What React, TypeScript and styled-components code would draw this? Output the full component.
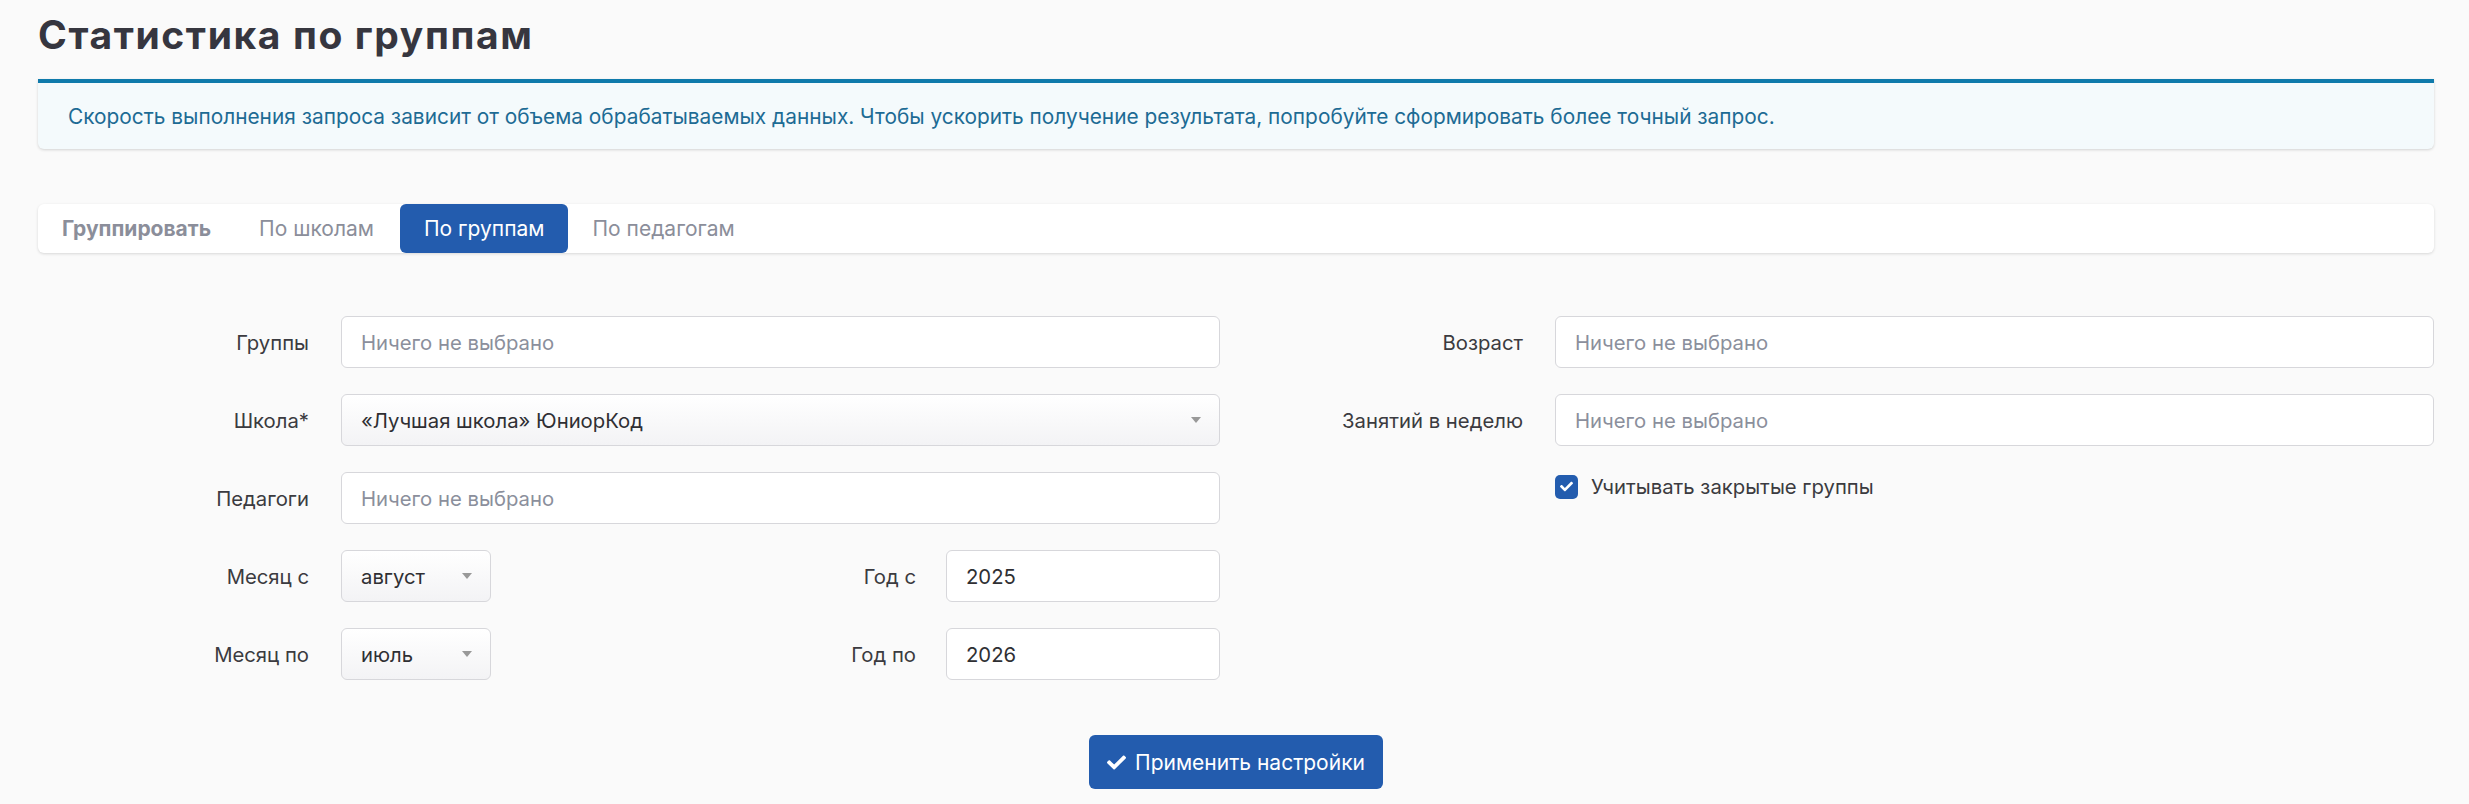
import React from "react";
import styled, { createGlobalStyle } from "styled-components";
import { FaCheck } from "react-icons/fa";

const GlobalStyle = createGlobalStyle`
  html, body {
    margin: 0;
    padding: 0;
    background: #fafafa;
    font-family: Inter, "Noto Sans", "Liberation Sans", sans-serif;
  }
`;

const Page = styled.div`
  padding: 11px 35px 0 38px;
`;

const Title = styled.h1`
  margin: 0;
  font-size: 39px;
  font-weight: 700;
  color: #36363f;
  letter-spacing: 1.6px;
`;

const Alert = styled.div`
  margin-top: 21px;
  background: #f4fafc;
  border-top: 4px solid #0f7aab;
  border-radius: 0 0 6px 6px;
  box-shadow: 0 1px 3px rgba(0, 0, 0, 0.16);
  padding: 21px 30px 20px;
  font-size: 20.85px;
  color: #1d6b94;
`;

const TabBar = styled.div`
  margin-top: 55px;
  height: 49px;
  display: flex;
  align-items: stretch;
  background: #fff;
  border-radius: 6px;
  box-shadow: 0 1px 3px rgba(0, 0, 0, 0.14);
  font-size: 21px;
`;

const Tab = styled.div<{ $active?: boolean; $caption?: boolean }>`
  display: flex;
  align-items: center;
  padding: 0 24px;
  border-radius: 6px;
  color: ${(p) => (p.$active ? "#fff" : "#8b8e9a")};
  background: ${(p) => (p.$active ? "#235cae" : "transparent")};
  font-weight: ${(p) => (p.$caption ? 700 : 400)};
  margin-left: ${(p) => (p.$active ? "2px" : "0")};
`;

const Form = styled.div`
  margin-top: 63px;
  display: grid;
  grid-template-columns: 1fr 1fr;
  column-gap: 32px;
`;

const Column = styled.div`
  display: flex;
  flex-direction: column;
  gap: 26px;
`;

const Row = styled.div<{ $plain?: boolean }>`
  display: grid;
  grid-template-columns: 271px 1fr;
  column-gap: 32px;
  align-items: center;
  min-height: ${(p) => (p.$plain ? "0" : "52px")};
`;

const Label = styled.div`
  text-align: right;
  font-size: 20.3px;
  color: #3b3b40;
`;

const Field = styled.div<{ $select?: boolean; $width?: string; $dim?: boolean }>`
  box-sizing: border-box;
  height: 52px;
  width: ${(p) => p.$width || "100%"};
  display: flex;
  align-items: center;
  justify-content: space-between;
  padding: 0 18px 0 19px;
  border: 1px solid #d7d7db;
  border-radius: 6px;
  background: ${(p) =>
    p.$select ? "linear-gradient(#ffffff, #f3f3f5)" : "#ffffff"};
  font-size: 20.3px;
  color: ${(p) => (p.$dim ? "#8b8f9c" : "#2f2f33")};
`;

const Caret = styled.span`
  width: 0;
  height: 0;
  border-left: 5px solid transparent;
  border-right: 5px solid transparent;
  border-top: 6px solid #999;
`;

const PeriodLine = styled.div`
  display: flex;
  align-items: center;
`;

const PeriodLabel = styled(Label)`
  flex: 1;
  margin-right: 30px;
`;

const CheckLine = styled.label`
  grid-column: 2;
  margin-top: 2px;
  display: flex;
  align-items: center;
  gap: 13px;
  font-size: 20.3px;
  color: #3b3b40;
`;

const CheckBox = styled.span`
  width: 23px;
  height: 24px;
  border-radius: 5px;
  background: #235cae;
  display: flex;
  align-items: center;
  justify-content: center;
  color: #fff;
`;

const Actions = styled.div`
  display: flex;
  justify-content: center;
  margin-top: 55px;
`;

const ApplyButton = styled.button`
  height: 54px;
  width: 294px;
  display: flex;
  align-items: center;
  justify-content: center;
  gap: 9px;
  border: none;
  border-radius: 6px;
  background: #235cae;
  color: #fff;
  font-family: inherit;
  font-size: 21px;
`;

const Select: React.FC<{ value: string; width?: string }> = ({ value, width }) => (
  <Field $select $width={width}>
    {value}
    <Caret />
  </Field>
);

const App: React.FC = () => {
  return (
    <Page>
      <GlobalStyle />
      <Title>Статистика по группам</Title>
      <Alert>
        Скорость выполнения запроса зависит от объема обрабатываемых данных.
        Чтобы ускорить получение результата, попробуйте сформировать более
        точный запрос.
      </Alert>

      <TabBar>
        <Tab $caption>Группировать</Tab>
        <Tab>По школам</Tab>
        <Tab $active>По группам</Tab>
        <Tab>По педагогам</Tab>
      </TabBar>

      <Form>
        <Column>
          <Row>
            <Label>Группы</Label>
            <Field $dim>Ничего не выбрано</Field>
          </Row>
          <Row>
            <Label>Школа*</Label>
            <Select value="«Лучшая школа» ЮниорКод" />
          </Row>
          <Row>
            <Label>Педагоги</Label>
            <Field $dim>Ничего не выбрано</Field>
          </Row>
          <Row>
            <Label>Месяц с</Label>
            <PeriodLine>
              <Select value="август" width="150px" />
              <PeriodLabel>Год с</PeriodLabel>
              <Field $width="274px">2025</Field>
            </PeriodLine>
          </Row>
          <Row>
            <Label>Месяц по</Label>
            <PeriodLine>
              <Select value="июль" width="150px" />
              <PeriodLabel>Год по</PeriodLabel>
              <Field $width="274px">2026</Field>
            </PeriodLine>
          </Row>
        </Column>

        <Column>
          <Row>
            <Label>Возраст</Label>
            <Field $dim>Ничего не выбрано</Field>
          </Row>
          <Row>
            <Label>Занятий в неделю</Label>
            <Field $dim>Ничего не выбрано</Field>
          </Row>
          <Row $plain>
            <CheckLine>
              <CheckBox>
                <FaCheck size={13} />
              </CheckBox>
              Учитывать закрытые группы
            </CheckLine>
          </Row>
        </Column>
      </Form>

      <Actions>
        <ApplyButton>
          <FaCheck size={19} />
          Применить настройки
        </ApplyButton>
      </Actions>
    </Page>
  );
};

export default App;
